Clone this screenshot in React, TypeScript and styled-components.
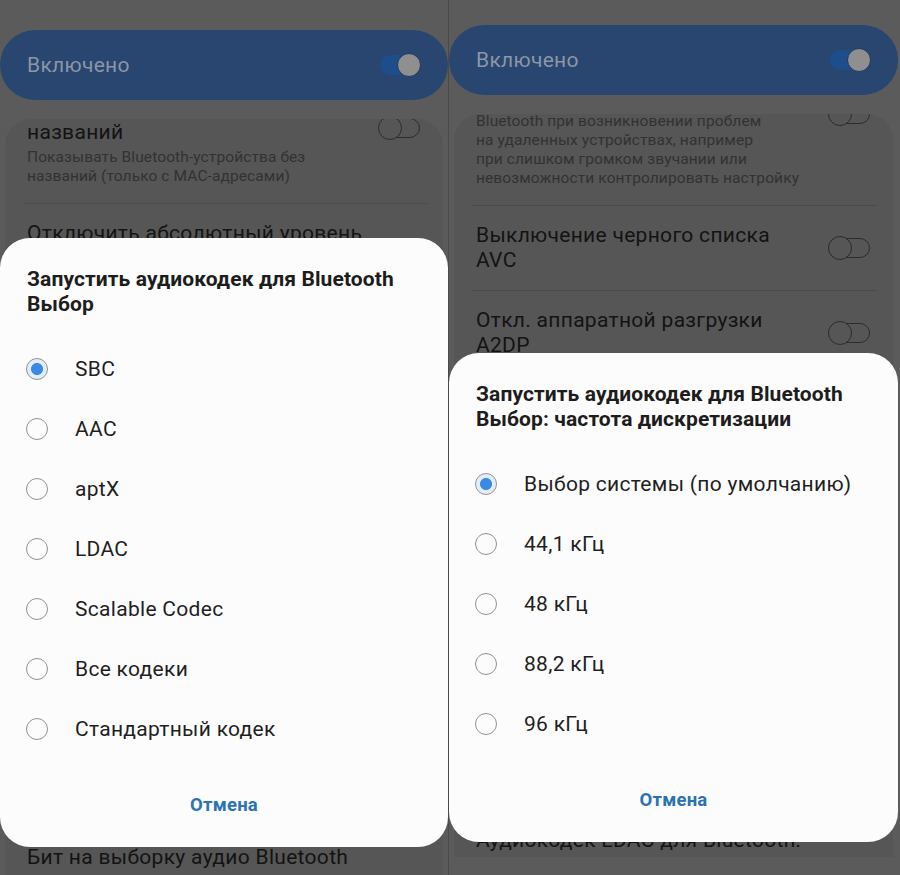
import React from "react";
import styled, { createGlobalStyle } from "styled-components";

const GlobalStyle = createGlobalStyle`
  html, body {
    margin: 0;
    padding: 0;
    background: #5b5b5b;
  }
  body {
    font-family: Roboto, "Noto Sans", "Liberation Sans", sans-serif;
  }
`;

const Page = styled.div`
  display: flex;
  width: 900px;
  height: 875px;
  overflow: hidden;
  background: #5b5b5b;
`;

const Screen = styled.div<{ $width: number; $top: number; $bottom: number; $seam?: boolean }>`
  position: relative;
  flex: 0 0 ${(p) => p.$width}px;
  box-sizing: border-box;
  height: 100%;
  display: flex;
  flex-direction: column;
  gap: 19px;
  padding: ${(p) => p.$top}px 0 ${(p) => p.$bottom}px;
  border-left: ${(p) => (p.$seam ? "1px solid #4a4a4a" : "none")};
  overflow: hidden;
`;

const MasterBar = styled.div<{ $gutter: number }>`
  flex: none;
  height: 70px;
  margin-right: ${(p) => p.$gutter}px;
  border-radius: 35px;
  background: #28466f;
  display: flex;
  align-items: center;
  justify-content: space-between;
  padding: 0 28px 0 27px;
  font-size: 21px;
  letter-spacing: 0.3px;
  color: #8b96a6;
`;

const Switch = styled.span<{ $on?: boolean }>`
  position: relative;
  flex: none;
  width: 40px;
  height: 20px;
  box-sizing: border-box;
  border-radius: 10px;
  background: ${(p) => (p.$on ? "#1d4e8b" : "transparent")};
  border: ${(p) => (p.$on ? "none" : "1.5px solid #2c2c2c")};

  &::after {
    content: "";
    position: absolute;
    top: 50%;
    ${(p) => (p.$on ? "right: -1px;" : "left: -3px;")}
    width: 24px;
    height: 24px;
    margin-top: -12px;
    box-sizing: border-box;
    border-radius: 50%;
    background: ${(p) => (p.$on ? "#8f8f8f" : "#565656")};
    border: 1.5px solid ${(p) => (p.$on ? "#1b3960" : "#2c2c2c")};
  }
`;

const ListCard = styled.div<{ $gutter: number }>`
  flex: 1;
  min-height: 0;
  margin: 0 ${(p) => p.$gutter + 5}px 0 5px;
  border-radius: 26px 26px 0 0;
  background: #565656;
  overflow: hidden;
`;

const ListBody = styled.div<{ $scroll: number }>`
  margin-top: -${(p) => p.$scroll}px;
`;

const Row = styled.div`
  display: flex;
  align-items: center;
  gap: 16px;
  padding: 17px 23px 17px 22px;
`;

const RowText = styled.div`
  flex: 1;
  min-width: 0;
`;

const RowTitle = styled.div`
  font-size: 21px;
  line-height: 25px;
  letter-spacing: 0.3px;
  color: #131313;
  white-space: pre;
`;

const RowSub = styled.div`
  margin-top: 3px;
  font-size: 15.5px;
  line-height: 19px;
  letter-spacing: 0.1px;
  color: #323232;
  white-space: pre;
`;

const Divider = styled.div`
  height: 1px;
  margin: 0 16px 0 18px;
  background: #4b4b4b;
`;

const Dialog = styled.div<{ $top: number; $gutter: number }>`
  position: absolute;
  left: 0;
  right: ${(p) => p.$gutter}px;
  top: ${(p) => p.$top}px;
  display: flex;
  flex-direction: column;
  padding: 29px 0 16px;
  border-radius: 30px;
  background: #fcfcfc;
`;

const DialogTitle = styled.div`
  margin-bottom: 22px;
  padding: 0 27px;
  font-size: 21px;
  font-weight: 700;
  line-height: 25px;
  letter-spacing: 0.1px;
  color: #1d1d1d;
  white-space: pre;
`;

const Option = styled.div`
  display: flex;
  align-items: center;
  gap: 27px;
  height: 60px;
  padding-left: 26px;
  font-size: 21px;
  letter-spacing: 0.3px;
  color: #1f1f1f;
`;

const Radio = styled.span<{ $checked?: boolean }>`
  flex: none;
  width: 22px;
  height: 22px;
  box-sizing: border-box;
  border-radius: 50%;
  border: 1.5px solid #929292;
  background: ${(p) =>
    p.$checked
      ? "radial-gradient(circle, #3c88e5 0 5.6px, #e4eefb 6.4px 100%)"
      : "transparent"};
`;

const CancelButton = styled.div`
  margin-top: 20px;
  height: 52px;
  display: flex;
  align-items: center;
  justify-content: center;
  font-size: 18.5px;
  font-weight: 700;
  letter-spacing: 0.2px;
  color: #2a72b3;
`;

type Setting = { title: string; sub?: string; toggle?: boolean };

const settings: Setting[] = [
  {
    title: "Показывать\nBluetooth-устройства без\nназваний",
    sub: "Показывать Bluetooth-устройства без\nназваний (только с MAC-адресами)",
    toggle: true,
  },
  {
    title: "Отключить абсолютный уровень\nгромкости",
    sub:
      "Отключить функцию абсолютного уровня\nBluetooth при возникновении проблем\nна удаленных устройствах, например\nпри слишком громком звучании или\nневозможности контролировать настройку",
    toggle: true,
  },
  { title: "Выключение черного списка\nAVC", toggle: true },
  { title: "Откл. аппаратной разгрузки\nA2DP", toggle: true },
  { title: "Версия Bluetooth AVRCP", sub: "AVRCP 1.4 (по умолчанию)" },
  { title: "Запустить аудиокодек для Bluetooth\nВыбор", sub: "SBC" },
  { title: "Частота дискретизации аудио", sub: "Выбор системы (по умолчанию)" },
  { title: "Бит на выборку аудио Bluetooth", sub: "Выбор системы (по умолчанию)" },
  { title: "Режим аудиоканала Bluetooth", sub: "Выбор системы (по умолчанию)" },
  {
    title: "Аудиокодек LDAC для Bluetooth:\nкачество воспроизведения",
    sub: "Оптимальное качество",
  },
];

const SettingsList = ({ scroll, gutter }: { scroll: number; gutter: number }) => (
  <ListCard $gutter={gutter}>
    <ListBody $scroll={scroll}>
      {settings.map((s, i) => (
        <React.Fragment key={i}>
          <Row>
            <RowText>
              <RowTitle>{s.title}</RowTitle>
              {s.sub && <RowSub>{s.sub}</RowSub>}
            </RowText>
            {s.toggle && <Switch />}
          </Row>
          <Divider />
        </React.Fragment>
      ))}
    </ListBody>
  </ListCard>
);

type PhoneProps = {
  width: number;
  top: number;
  bottom: number;
  gutter: number;
  scroll: number;
  seam?: boolean;
  dialogTop: number;
  dialogTitle: string;
  options: string[];
};

const Phone = (p: PhoneProps) => (
  <Screen $width={p.width} $top={p.top} $bottom={p.bottom} $seam={p.seam}>
    <MasterBar $gutter={p.gutter}>
      Включено
      <Switch $on />
    </MasterBar>
    <SettingsList scroll={p.scroll} gutter={p.gutter} />
    <Dialog $top={p.dialogTop} $gutter={p.gutter}>
      <DialogTitle>{p.dialogTitle}</DialogTitle>
      {p.options.map((o, i) => (
        <Option key={o}>
          <Radio $checked={i === 0} />
          {o}
        </Option>
      ))}
      <CancelButton>Отмена</CancelButton>
    </Dialog>
  </Screen>
);

export default function App() {
  return (
    <>
      <GlobalStyle />
      <Page>
        <Phone
          width={448}
          top={30}
          bottom={0}
          gutter={0}
          scroll={66}
          dialogTop={238}
          dialogTitle={"Запустить аудиокодек для Bluetooth\nВыбор"}
          options={["SBC", "AAC", "aptX", "LDAC", "Scalable Codec", "Все кодеки", "Стандартный кодек"]}
        />
        <Phone
          width={452}
          top={25}
          bottom={18}
          gutter={2}
          scroll={242}
          seam
          dialogTop={353}
          dialogTitle={"Запустить аудиокодек для Bluetooth\nВыбор: частота дискретизации"}
          options={["Выбор системы (по умолчанию)", "44,1 кГц", "48 кГц", "88,2 кГц", "96 кГц"]}
        />
      </Page>
    </>
  );
}
